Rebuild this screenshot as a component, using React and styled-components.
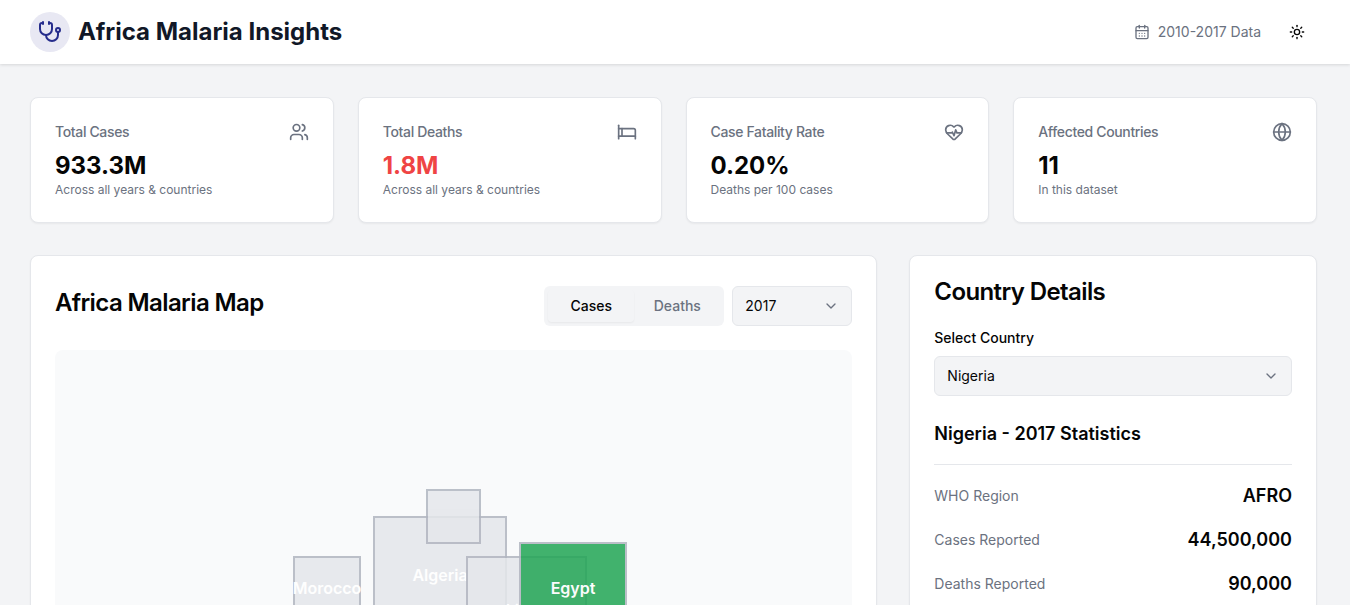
import React from 'react';
import styled, { createGlobalStyle } from 'styled-components';
import { Stethoscope, CalendarDays, Sun, Users, Bed, HeartPulse, Globe, ChevronDown } from 'lucide-react';

const stats = [
    { label: 'Total Cases', value: '933.3M', note: 'Across all years & countries', Icon: Users },
    { label: 'Total Deaths', value: '1.8M', note: 'Across all years & countries', Icon: Bed, danger: true },
    { label: 'Case Fatality Rate', value: '0.20%', note: 'Deaths per 100 cases', Icon: HeartPulse },
    { label: 'Affected Countries', value: '11', note: 'In this dataset', Icon: Globe },
];

const countries = [
    { name: 'Algeria', x: 318, y: 166, w: 134, h: 118 },
    { name: '', x: 371, y: 139, w: 55, h: 55 },
    { name: 'Morocco', x: 238, y: 206, w: 68, h: 64 },
    { name: 'Libya', x: 411, y: 206, w: 121, h: 108 },
    { name: 'Egypt', x: 464, y: 192, w: 108, h: 92, high: true },
];

const details = [
    { label: 'WHO Region', value: 'AFRO' },
    { label: 'Cases Reported', value: '44,500,000' },
    { label: 'Deaths Reported', value: '90,000' },
];

const App = () => (
    <Page>
        <GlobalStyle />
        <Header>
            <Brand>
                <LogoCircle><Stethoscope size={24} strokeWidth={2} /></LogoCircle>
                <Title>Africa Malaria Insights</Title>
            </Brand>
            <HeaderRight>
                <DataRange><CalendarDays size={16} />2010-2017 Data</DataRange>
                <ThemeButton><Sun size={16} /></ThemeButton>
            </HeaderRight>
        </Header>
        <Main>
            <StatGrid>
                {stats.map(({ label, value, note, Icon, danger }) => (
                    <StatCard key={label}>
                        <StatTop>
                            <StatLabel>{label}</StatLabel>
                            <StatIcon><Icon size={20} /></StatIcon>
                        </StatTop>
                        <StatValue danger={danger}>{value}</StatValue>
                        <StatNote>{note}</StatNote>
                    </StatCard>
                ))}
            </StatGrid>
            <Columns>
                <MapCard>
                    <MapHeader>
                        <MapTitle>Africa Malaria Map</MapTitle>
                        <MapControls>
                            <Tabs>
                                <Tab active>Cases</Tab>
                                <Tab>Deaths</Tab>
                            </Tabs>
                            <YearSelect>2017<ChevronDown size={16} /></YearSelect>
                        </MapControls>
                    </MapHeader>
                    <MapArea>
                        {countries.map((c, i) => (
                            <CountryBox
                                key={i}
                                high={c.high}
                                style={{ left: c.x, top: c.y, width: c.w, height: c.h }}
                            >
                                {c.name}
                            </CountryBox>
                        ))}
                    </MapArea>
                </MapCard>
                <DetailCard>
                    <DetailTitle>Country Details</DetailTitle>
                    <FieldLabel>Select Country</FieldLabel>
                    <CountrySelect>Nigeria<ChevronDown size={16} /></CountrySelect>
                    <SubTitle>Nigeria - 2017 Statistics</SubTitle>
                    <Divider />
                    <DetailList>
                        {details.map(d => (
                            <DetailRow key={d.label}>
                                <DetailLabel>{d.label}</DetailLabel>
                                <DetailValue>{d.value}</DetailValue>
                            </DetailRow>
                        ))}
                    </DetailList>
                </DetailCard>
            </Columns>
        </Main>
    </Page>
);

export default App;

const GlobalStyle = createGlobalStyle`
    html, body {
        margin: 0;
        height: 605px;
        overflow: hidden;
        background: #f3f4f6;
    }
    * {
        box-sizing: border-box;
    }
`;

const Page = styled.div`
    width: 1350px;
    font-family: Inter, "Liberation Sans", sans-serif;
    line-height: 20px;
    color: #050505;
`;

const Header = styled.header`
    height: 64px;
    padding: 0 33px 0 30px;
    display: flex;
    align-items: center;
    justify-content: space-between;
    background: #ffffff;
    box-shadow: 0 1px 3px rgba(0, 0, 0, 0.12);
`;

const Brand = styled.div`
    display: flex;
    align-items: center;
    gap: 8px;
`;

const LogoCircle = styled.div`
    width: 40px;
    height: 40px;
    border-radius: 50%;
    display: flex;
    align-items: center;
    justify-content: center;
    background: #e8e8f3;
    color: #262d8c;
`;

const Title = styled.h1`
    margin: 0;
    font-size: 24px;
    line-height: 32px;
    font-weight: 700;
    color: #111827;
`;

const HeaderRight = styled.div`
    display: flex;
    align-items: center;
    gap: 16px;
`;

const DataRange = styled.div`
    display: flex;
    align-items: center;
    gap: 8px;
    font-size: 14px;
    color: #6b7280;
`;

const ThemeButton = styled.div`
    width: 40px;
    height: 40px;
    display: flex;
    align-items: center;
    justify-content: center;
    color: #050505;
`;

const Main = styled.main`
    padding: 33px 33px 0 30px;
`;

const StatGrid = styled.div`
    display: grid;
    grid-template-columns: repeat(4, 1fr);
    gap: 24px;
`;

const StatCard = styled.div`
    height: 126px;
    padding: 24px 24px 0;
    background: #ffffff;
    border: 1px solid #e5e7eb;
    border-radius: 8px;
    box-shadow: 0 1px 2px rgba(0, 0, 0, 0.05);
`;

const StatTop = styled.div`
    display: flex;
    align-items: center;
    justify-content: space-between;
    height: 20px;
`;

const StatLabel = styled.div`
    font-size: 14px;
    font-weight: 500;
    letter-spacing: -0.35px;
    color: #6b7280;
`;

const StatIcon = styled.div`
    display: flex;
    color: #6b7280;
`;

const StatValue = styled.div`
    margin-top: 8px;
    font-size: 24px;
    line-height: 32px;
    font-weight: 700;
    color: ${props => props.danger ? '#ef4444' : '#050505'};
`;

const StatNote = styled.div`
    font-size: 12px;
    line-height: 16px;
    color: #6b7280;
`;

const Columns = styled.div`
    margin-top: 32px;
    display: grid;
    grid-template-columns: repeat(3, 1fr);
    gap: 32px;
    align-items: start;
`;

const MapCard = styled.section`
    grid-column: span 2;
    height: 500px;
    padding: 24px;
    background: #ffffff;
    border: 1px solid #e5e7eb;
    border-radius: 8px;
    box-shadow: 0 1px 2px rgba(0, 0, 0, 0.05);
`;

const MapHeader = styled.div`
    display: flex;
    align-items: flex-start;
    justify-content: space-between;
    margin-bottom: 24px;
`;

const MapTitle = styled.h2`
    margin: 7px 0 0;
    font-size: 24px;
    line-height: 32px;
    font-weight: 600;
    letter-spacing: -0.6px;
`;

const MapControls = styled.div`
    display: flex;
    gap: 8px;
    margin-top: 6px;
`;

const Tabs = styled.div`
    display: flex;
    width: 180px;
    height: 40px;
    padding: 4px;
    border-radius: 6px;
    background: #f3f4f6;
`;

const Tab = styled.div`
    flex: 1;
    display: flex;
    align-items: center;
    justify-content: center;
    border-radius: 4px;
    font-size: 14px;
    font-weight: 500;
    color: ${props => props.active ? '#050505' : '#6b7280'};
    box-shadow: ${props => props.active ? '0 1px 2px rgba(0, 0, 0, 0.05)' : 'none'};
`;

const YearSelect = styled.div`
    width: 120px;
    height: 40px;
    padding: 0 12px;
    display: flex;
    align-items: center;
    justify-content: space-between;
    font-size: 14px;
    background: #f3f4f6;
    border: 1px solid #e5e7eb;
    border-radius: 6px;

    svg {
        color: #6b7280;
    }
`;

const MapArea = styled.div`
    position: relative;
    height: 400px;
    border-radius: 8px;
    background: #f9fafb;
    overflow: hidden;
`;

const CountryBox = styled.div`
    position: absolute;
    display: flex;
    align-items: center;
    justify-content: center;
    font-size: 16px;
    font-weight: 600;
    color: #ffffff;
    white-space: nowrap;
    border: 2px solid #b1b5c0;
    opacity: 0.85;
    background: ${props => props.high ? '#22a655' : '#e5e7eb'};
`;

const DetailCard = styled.section`
    height: 500px;
    padding: 24px;
    background: #ffffff;
    border: 1px solid #e5e7eb;
    border-radius: 8px;
    box-shadow: 0 1px 2px rgba(0, 0, 0, 0.05);
`;

const DetailTitle = styled.h2`
    margin: 0;
    font-size: 24px;
    line-height: 24px;
    font-weight: 600;
    letter-spacing: -0.6px;
`;

const FieldLabel = styled.div`
    margin-top: 24px;
    font-size: 14px;
    line-height: 20px;
    font-weight: 500;
`;

const CountrySelect = styled.div`
    margin-top: 8px;
    height: 40px;
    padding: 0 12px;
    display: flex;
    align-items: center;
    justify-content: space-between;
    font-size: 14px;
    background: #f3f4f6;
    border: 1px solid #e5e7eb;
    border-radius: 6px;

    svg {
        color: #6b7280;
    }
`;

const SubTitle = styled.h3`
    margin: 24px 0 0;
    font-size: 18px;
    line-height: 28px;
    font-weight: 600;
`;

const Divider = styled.div`
    margin-top: 16px;
    height: 1px;
    background: #e5e7eb;
`;

const DetailList = styled.div`
    margin-top: 17px;
    display: flex;
    flex-direction: column;
    gap: 16px;
`;

const DetailRow = styled.div`
    display: flex;
    align-items: center;
    justify-content: space-between;
    height: 28px;
`;

const DetailLabel = styled.div`
    font-size: 14px;
    color: #6b7280;
`;

const DetailValue = styled.div`
    font-size: 18px;
    line-height: 28px;
    font-weight: 600;
`;
